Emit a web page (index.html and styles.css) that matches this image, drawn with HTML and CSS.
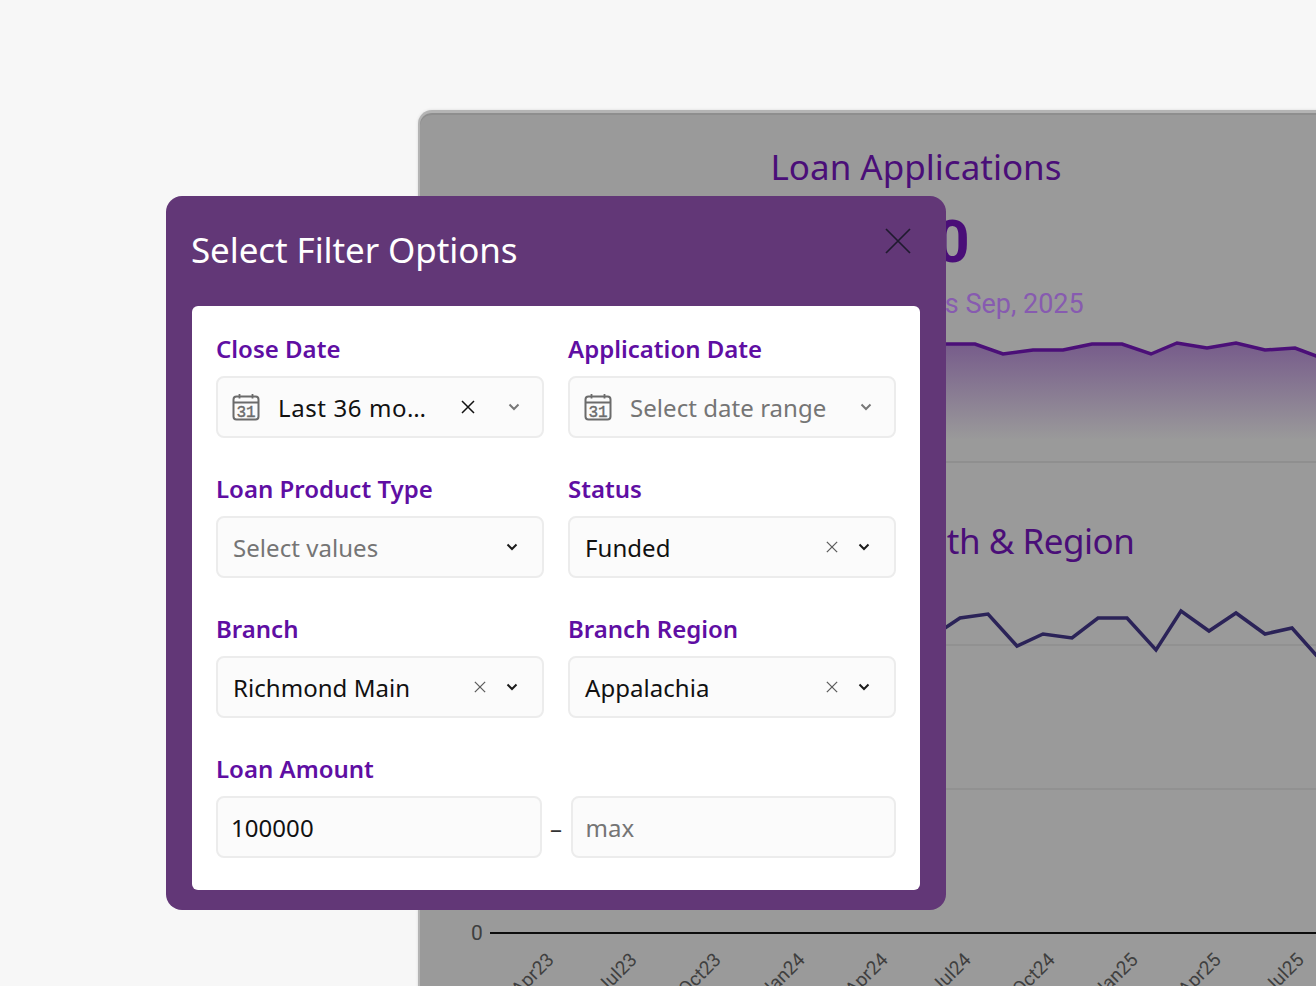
FILE: index.html
```html
<!DOCTYPE html>
<html>
<head>
    <title>Select Filter Options</title>
    <link rel="stylesheet" href="styles.css">
</head>
<body>
    <svg class="icon-defs" width="0" height="0">
        <symbol id="calendar" viewBox="0 0 28 28">
            <rect x="1.5" y="3.5" width="25" height="23" rx="3" fill="none" stroke="currentColor" stroke-width="2"/>
            <path d="M1.5 9.5H26.5M7.5 1V5.5M20.5 1V5.5" fill="none" stroke="currentColor" stroke-width="1.8"/>
            <text x="14" y="23.5" text-anchor="middle" class="cal-day">31</text>
        </symbol>
        <symbol id="cross" viewBox="0 0 14 14">
            <path d="M1 1L13 13M13 1L1 13" fill="none" stroke="currentColor" stroke-width="1.5"/>
        </symbol>
        <symbol id="chevron" viewBox="0 0 12 8">
            <path d="M1.5 1.5L6 6L10.5 1.5" fill="none" stroke="currentColor" stroke-width="2"/>
        </symbol>
    </svg>

    <!-- dimmed report behind the dialog -->
    <section class="report">
        <h2 class="report-title">Loan Applications</h2>
        <div class="report-number">650</div>
        <div class="report-sub">Total Applications Sep, 2025</div>
        <svg class="chart-top" viewBox="418 330 996 131" width="996" height="131">
            <defs>
                <linearGradient id="areaFade" x1="0" y1="0" x2="0" y2="1">
                    <stop offset="0" stop-color="#4b0f78" stop-opacity="0.45"/>
                    <stop offset="1" stop-color="#4b0f78" stop-opacity="0"/>
                </linearGradient>
            </defs>
            <path fill="url(#areaFade)" d="M945 344L975 344L1003 354L1033 350L1063 350L1092 344L1122 344L1151 354L1177 343L1207 348L1236 343L1265 350L1295 348L1316 356L1316 440L945 440Z"/>
            <polyline class="line-top" points="490,350 600,346 720,350 860,346 945,344 975,344 1003,354 1033,350 1063,350 1092,344 1122,344 1151,354 1177,343 1207,348 1236,343 1265,350 1295,348 1316,356 1340,352"/>
        </svg>
        <h2 class="report-title second">Funded by Month &amp; Region</h2>
        <svg class="chart-bottom" viewBox="418 590 996 400" width="996" height="400">
            <path class="grid" d="M490 645H1414M490 789H1414"/>
            <polyline class="line-bottom" points="490,640 600,625 720,640 860,630 945,628 960,618 988,614 1017,646 1043,634 1072,638 1098,618 1127,618 1156,650 1181,611 1209,631 1236,613 1265,634 1292,628 1316,655 1340,640"/>
            <path class="axis" d="M490 933H1414"/>
            <text class="axis-zero" x="477" y="940" text-anchor="middle">0</text>
            <text class="tick" text-anchor="end" transform="translate(555 961) rotate(-45)">Apr23</text>
            <text class="tick" text-anchor="end" transform="translate(638 961) rotate(-45)">Jul23</text>
            <text class="tick" text-anchor="end" transform="translate(722 961) rotate(-45)">Oct23</text>
            <text class="tick" text-anchor="end" transform="translate(806 961) rotate(-45)">Jan24</text>
            <text class="tick" text-anchor="end" transform="translate(889 961) rotate(-45)">Apr24</text>
            <text class="tick" text-anchor="end" transform="translate(972 961) rotate(-45)">Jul24</text>
            <text class="tick" text-anchor="end" transform="translate(1056 961) rotate(-45)">Oct24</text>
            <text class="tick" text-anchor="end" transform="translate(1139 961) rotate(-45)">Jan25</text>
            <text class="tick" text-anchor="end" transform="translate(1222 961) rotate(-45)">Apr25</text>
            <text class="tick" text-anchor="end" transform="translate(1305 961) rotate(-45)">Jul25</text>
        </svg>
    </section>

    <!-- filter dialog -->
    <div class="dialog">
        <div class="dialog-head">
            <h1>Select Filter Options</h1>
            <svg class="dialog-close" width="26" height="26" viewBox="0 0 26 26">
                <path d="M1 1L25 25M25 1L1 25" fill="none" stroke="currentColor" stroke-width="1.7"/>
            </svg>
        </div>
        <div class="dialog-body">
            <div class="filter-grid">
                <div class="filter">
                    <label>Close Date</label>
                    <div class="field date">
                        <svg class="cal"><use href="#calendar"/></svg>
                        <span class="value clipped">Last 36 mo…</span>
                        <svg class="clear dark"><use href="#cross"/></svg>
                        <svg class="chev soft"><use href="#chevron"/></svg>
                    </div>
                </div>
                <div class="filter">
                    <label>Application Date</label>
                    <div class="field date">
                        <svg class="cal"><use href="#calendar"/></svg>
                        <span class="value placeholder">Select date range</span>
                        <svg class="chev soft"><use href="#chevron"/></svg>
                    </div>
                </div>
                <div class="filter">
                    <label>Loan Product Type</label>
                    <div class="field">
                        <span class="value placeholder">Select values</span>
                        <svg class="chev"><use href="#chevron"/></svg>
                    </div>
                </div>
                <div class="filter">
                    <label>Status</label>
                    <div class="field">
                        <span class="value">Funded</span>
                        <svg class="clear"><use href="#cross"/></svg>
                        <svg class="chev"><use href="#chevron"/></svg>
                    </div>
                </div>
                <div class="filter">
                    <label>Branch</label>
                    <div class="field">
                        <span class="value">Richmond Main</span>
                        <svg class="clear"><use href="#cross"/></svg>
                        <svg class="chev"><use href="#chevron"/></svg>
                    </div>
                </div>
                <div class="filter">
                    <label>Branch Region</label>
                    <div class="field">
                        <span class="value">Appalachia</span>
                        <svg class="clear"><use href="#cross"/></svg>
                        <svg class="chev"><use href="#chevron"/></svg>
                    </div>
                </div>
                <div class="filter wide">
                    <label>Loan Amount</label>
                    <div class="range">
                        <div class="field number"><span class="value">100000</span></div>
                        <span class="dash">–</span>
                        <div class="field number"><span class="value placeholder">max</span></div>
                    </div>
                </div>
            </div>
        </div>
    </div>
</body>
</html>
```

FILE: styles.css
```css
* {
    box-sizing: border-box;
}
html, body {
    height: 100%;
}
body {
    margin: 0;
    overflow: hidden;
    background-color: #f7f7f7;
    font-family: "Noto Sans", sans-serif;
}
.icon-defs {
    position: absolute;
}
.cal-day {
    font-family: "Liberation Mono", monospace;
    font-size: 16px;
    fill: currentColor;
    stroke: currentColor;
    stroke-width: 0.4px;
}

/* report behind */
.report {
    position: absolute;
    left: 418px;
    top: 110px;
    width: 996px;
    height: 900px;
    padding-top: 30px;
    background-color: #9a9a9a;
    border-top: 3px solid #b4b4b4;
    border-left: 2px solid #b4b4b4;
    border-radius: 14px 0 0 0;
    box-shadow: inset 0 2px 0 #8e8e8e, 0 0 3px #d8d8d8;
    text-align: center;
}
.report-title {
    margin: 0 0 0 -2px;
    font-size: 35px;
    font-weight: 400;
    line-height: 48px;
    color: #4a0e78;
}
.report-title.second {
    margin-top: 54px;
    letter-spacing: -0.5px;
}
.report-number {
    margin: 21px 0 0 2px;
    font-family: Roboto, sans-serif;
    font-size: 60px;
    font-weight: 700;
    line-height: 60px;
    color: #4a0e78;
}
.report-sub {
    margin: 14px 0 0 -8px;
    font-family: Roboto, sans-serif;
    font-size: 27px;
    line-height: 36px;
    color: #875bb0;
}
.chart-top, .chart-bottom {
    display: block;
    margin-left: -2px;
}
.chart-top {
    margin-top: 8px;
    border-bottom: 2px solid #8f8f8f;
    height: 133px;
}
.chart-bottom {
    margin-top: 25px;
}
.line-top, .line-bottom {
    fill: none;
    stroke-linejoin: miter;
    stroke-width: 3.5px;
}
.line-top {
    stroke: #4b0f78;
}
.line-bottom {
    stroke: #2b2358;
}
.grid {
    fill: none;
    stroke: #8f8f8f;
    stroke-width: 1.5px;
}
.axis {
    fill: none;
    stroke: #0c0c0c;
    stroke-width: 2px;
}
.axis-zero, .tick {
    font-family: Roboto, sans-serif;
    fill: #3f3f3f;
}
.axis-zero {
    font-size: 21px;
}
.tick {
    font-size: 19px;
}

/* dialog */
.dialog {
    position: absolute;
    left: 166px;
    top: 196px;
    width: 780px;
    height: 714px;
    background-color: #623777;
    border-radius: 16px;
}
.dialog-head {
    display: flex;
    justify-content: space-between;
    height: 110px;
    padding: 32px 35px 0 25px;
}
.dialog-head h1 {
    margin: 1px 0 0;
    font-size: 35px;
    font-weight: 400;
    line-height: 42px;
    letter-spacing: -0.1px;
    color: #fff;
}
.dialog-close {
    color: #1f1a2e;
}
.dialog-body {
    height: 584px;
    margin: 0 26px;
    padding: 24px;
    background-color: #fff;
    border-radius: 6px;
}
.filter-grid {
    display: grid;
    grid-template-columns: 328px 328px;
    column-gap: 24px;
    row-gap: 32px;
}
.filter.wide {
    grid-column: 1 / 3;
}
.filter label {
    display: block;
    height: 46px;
    font-size: 24px;
    font-weight: 600;
    line-height: 38px;
    color: #5f0ea3;
}
.field {
    display: flex;
    align-items: center;
    height: 62px;
    padding: 0 24px 0 15px;
    background-color: #fbfbfb;
    border: 2px solid #ececec;
    border-radius: 8px;
}
.field.date {
    padding-left: 14px;
    padding-right: 22px;
}
.value {
    flex-grow: 1;
    font-size: 24px;
    letter-spacing: 0.05px;
    color: #111;
    white-space: nowrap;
}
.value.placeholder {
    color: #757575;
}
.value.clipped {
    letter-spacing: 0.6px;
}
.cal {
    flex-shrink: 0;
    width: 28px;
    height: 28px;
    margin-right: 18px;
    color: #6b6b6b;
}
.clear {
    flex-shrink: 0;
    width: 12px;
    height: 12px;
    margin-right: 20px;
    color: #5d5d5d;
}
.clear.dark {
    width: 14px;
    height: 14px;
    margin-right: 33px;
    color: #111;
}
.chev {
    flex-shrink: 0;
    width: 12px;
    height: 8px;
    color: #1b1b1b;
}
.chev.soft {
    color: #777;
}
.range {
    display: flex;
    align-items: center;
}
.range .field {
    flex: 1;
    padding: 0 13px;
}
.dash {
    width: 29px;
    text-align: center;
    font-size: 24px;
    color: #333;
}
```
